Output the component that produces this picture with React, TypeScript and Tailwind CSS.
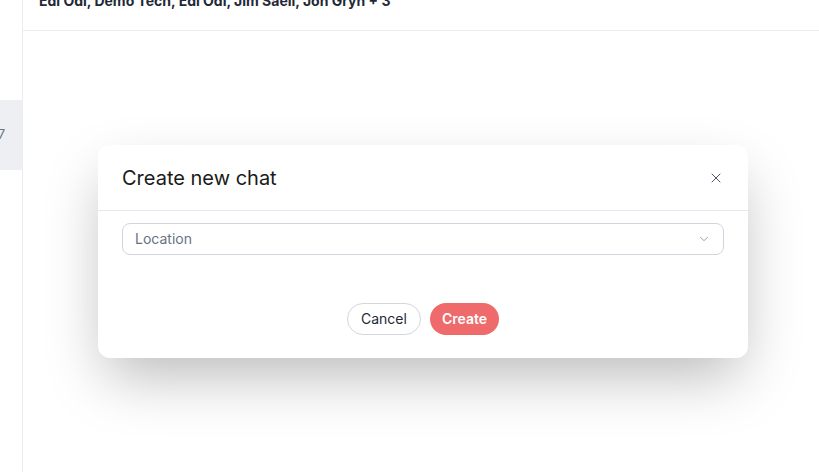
import React from 'react';
import { X, ChevronDown } from 'lucide-react';

export default function App() {
  return (
    <div className="relative h-[472px] w-full overflow-hidden bg-white font-['Inter',sans-serif]">
      <div className="flex h-full">
        {/* Sidebar */}
        <div className="w-[23px] shrink-0 border-r border-[#ececf0]">
          <div className="mt-[100px] flex h-[70px] items-center justify-end overflow-hidden bg-[#eeeff3] pr-[17px] text-[13px] text-[#6b7280]">
            7
          </div>
        </div>

        {/* Main */}
        <div className="flex-1">
          <div className="flex h-[31px] items-start border-b border-[#ececec] pl-4">
            <p className="relative -top-[9px] whitespace-nowrap text-sm font-bold text-[#1f2937]">
              Edi Odi, Demo Tech, Edi Odi, Jim Saeli, Jon Gryn + 3
            </p>
          </div>
        </div>
      </div>

      {/* Modal */}
      <div className="absolute inset-0 flex items-start pl-[98px] pt-[145px]">
        <div className="w-[650px] rounded-xl bg-white shadow-[0_25px_60px_-8px_rgba(0,0,0,0.28)]">
          <div className="flex h-[66px] items-center justify-between border-b border-[#e8e8ea] px-6">
            <h2 className="text-xl text-[#1a1a1a]">Create new chat</h2>
            <X className="h-4 w-4 text-[#4b5563]" strokeWidth={1.5} />
          </div>
          <div className="px-6 pt-3 pb-[23px]">
            <div className="flex h-8 items-center justify-between rounded-lg border border-[#d2d5de] pl-3 pr-3">
              <span className="text-sm text-[#6b7185]">Location</span>
              <ChevronDown className="h-3.5 w-3.5 text-[#8a8f99]" strokeWidth={1.5} />
            </div>
            <div className="mt-12 flex justify-center gap-[9px]">
              <button className="h-8 rounded-full border border-[#d4d6dd] px-[13px] text-sm text-[#1f2937]">
                Cancel
              </button>
              <button className="h-8 rounded-full bg-[#ef6a6a] px-3 text-sm font-semibold text-white">
                Create
              </button>
            </div>
          </div>
        </div>
      </div>
    </div>
  );
}
